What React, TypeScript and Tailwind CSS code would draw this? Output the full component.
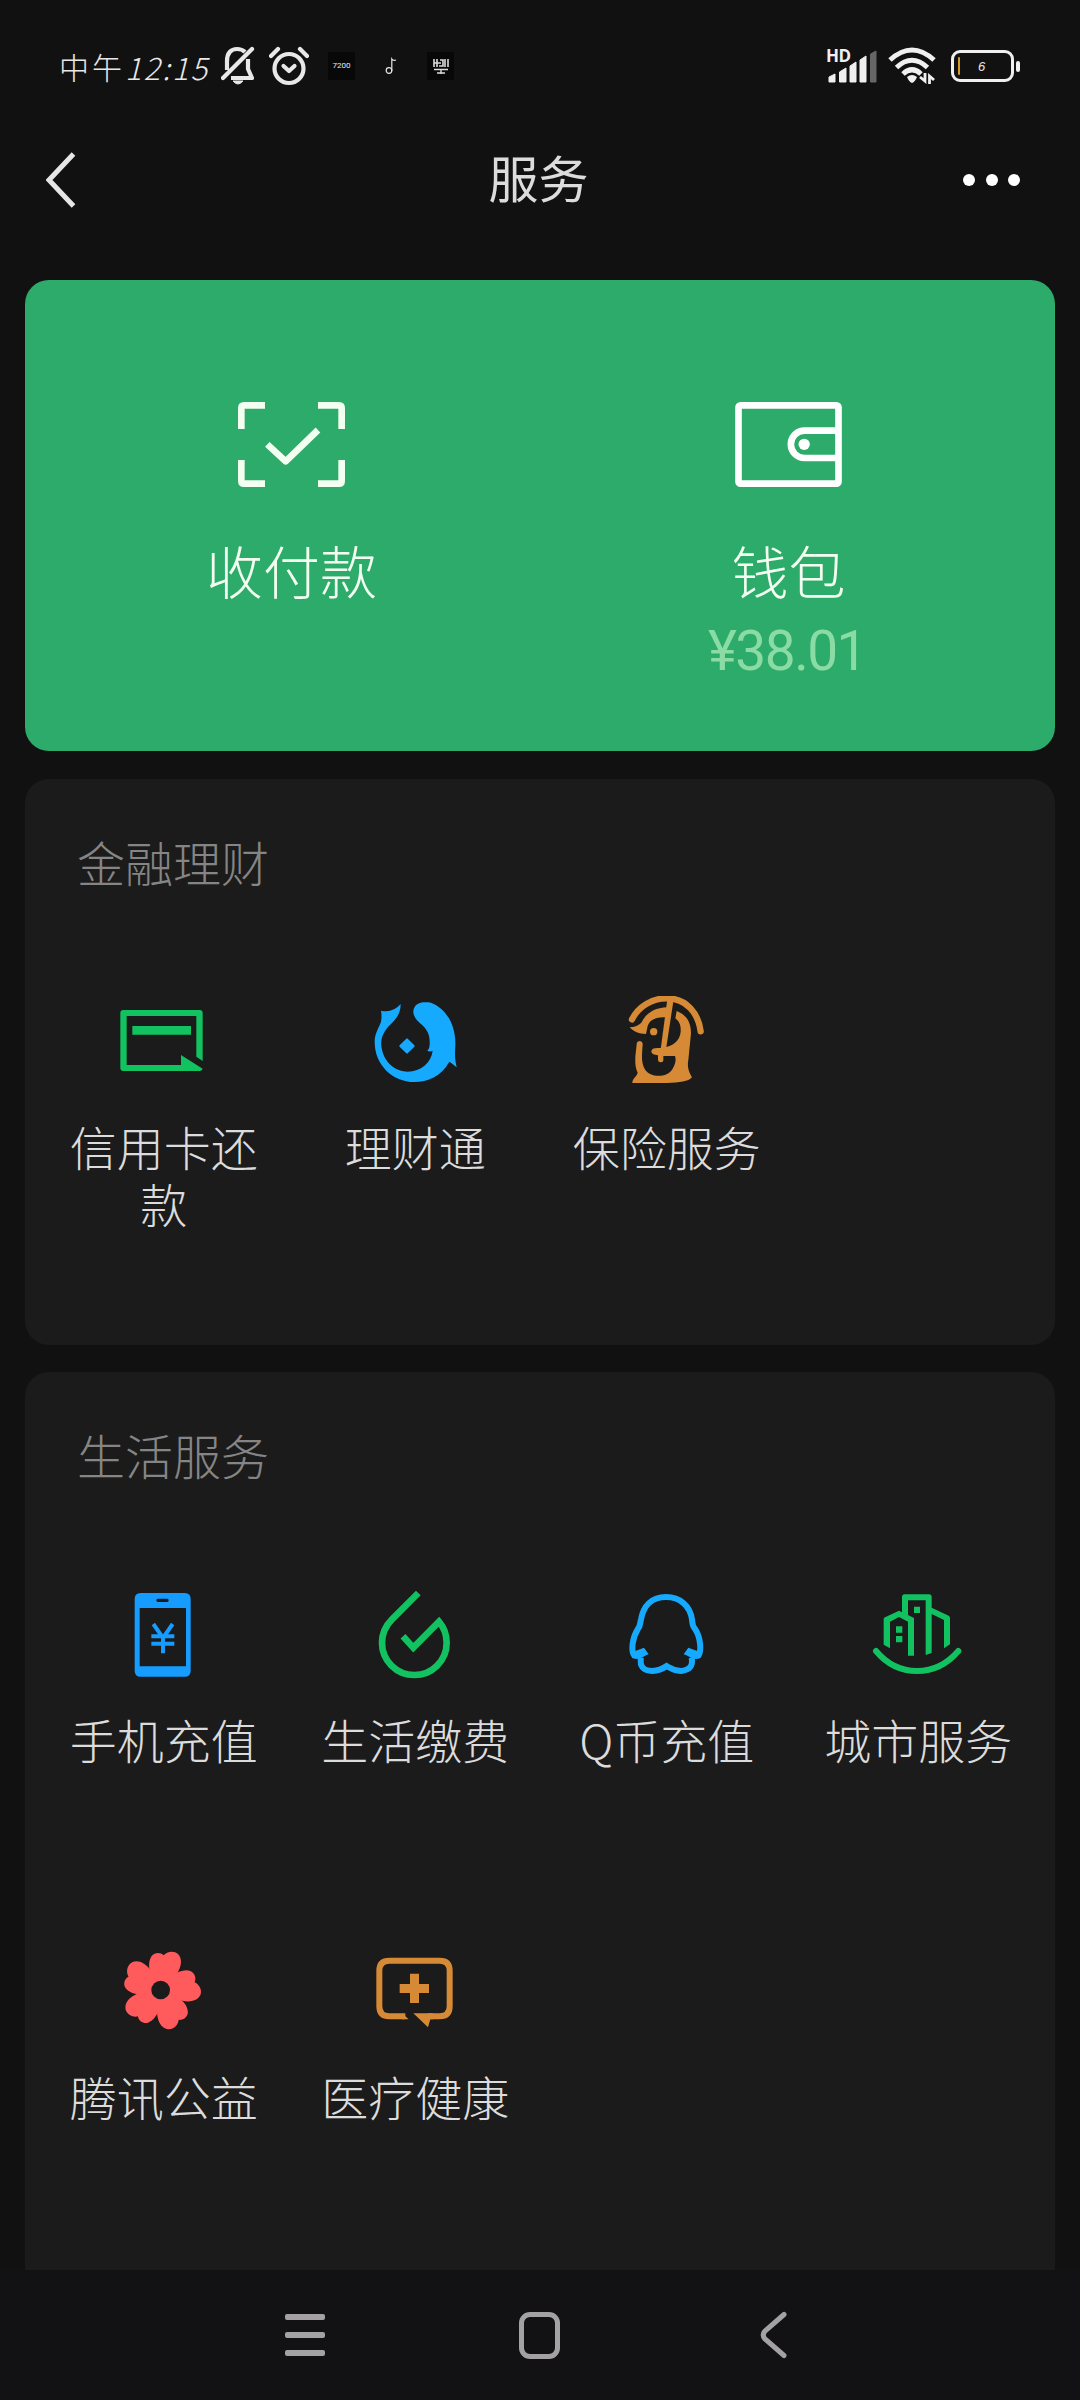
import type { ReactNode } from "react";

type Item = { label: string; icon: ReactNode };

const GREEN = "#12c160";
const BLUE = "#16aaff";
const AMBER = "#d68a36";
const CORAL = "#ff5a5c";

function Icon({ box, children }: { box: string; children: ReactNode }) {
  return (
    <svg viewBox={box} className="h-[90px] w-[90px] shrink-0" fill="none">
      {children}
    </svg>
  );
}

const CardIcon = (
  <Icon box="234 588 270 270">
    <path
      fill={GREEN}
      fillRule="evenodd"
      d="M250 630H479Q488 630 488 639V783L469 770V648H260V795H423V765L488 806Q486 813 479 813H250Q241 813 241 804V639Q241 630 250 630Z"
    />
    <path d="M277 678H453V704H277Z" fill={GREEN} />
  </Icon>
);

const FishIcon = (
  <Icon box="989 588 270 270">
    <path
      fill={BLUE}
      d="M1025 632Q1060 640 1084 612C1084 640 1072 655 1055 672C1030 695 1022 720 1027 745C1035 790 1070 815 1105 815C1145 813 1175 790 1180 752Q1172 756 1164 753Q1172 745 1171 730C1172 705 1165 690 1145 672C1125 655 1118 640 1124 625C1130 608 1150 604 1175 608C1220 625 1250 675 1248 735C1247 760 1245 770 1252 802C1243 795 1238 790 1230 785C1205 830 1165 846 1125 846C1060 846 1006 795 1006 725C1006 700 1018 685 1025 665Q1028 650 1025 632Z"
    />
    <path d="M1103 718L1123 738L1103 758L1083 738Z" fill={BLUE} stroke={BLUE} strokeWidth="6" strokeLinejoin="round" />
  </Icon>
);

const InsuranceIcon = (
  <Icon box="423 108 270 270">
    <path d="M456 178C475 140 515 115 560 115C620 115 655 160 662 214" stroke={AMBER} strokeWidth="19" strokeLinecap="round" />
    <path d="M562 118H581L558 268H542Z" fill={AMBER} />
    <path d="M449 202Q472 200 484 188C496 162 522 143 562 142L558 172C530 170 510 178 503 198L498 222C478 222 460 215 449 202Z" fill={AMBER} />
    <circle cx="521" cy="215" r="11" fill={AMBER} />
    <path
      fill={AMBER}
      d="M590 153C622 165 633 190 633 220L625 300C620 325 630 340 636 352C625 365 600 368 560 369H457C457 355 470 350 473 338C460 310 468 280 470 252Q471 243 480 243Q489 245 488 254C486 280 482 310 496 330C512 354 562 354 578 326C588 308 588 298 585 288H550V302Q549 307 541 307Q534 306 534 300V286C518 284 510 278 516 269C522 262 530 265 546 263C580 260 600 240 602 215C603 195 598 185 586 175Z"
    />
  </Icon>
);

const PhoneIcon = (
  <Icon box="235 564 270 270">
    <path
      fill="#169cff"
      fillRule="evenodd"
      d="M303 576H435Q453 576 453 594V809Q453 827 435 827H303Q285 827 285 809V594Q285 576 303 576ZM300 621V796H439V621ZM354 593Q350 593 350 598Q350 603 354 603H383Q387 603 387 598Q387 593 383 593Z"
    />
    <path d="M341 669L370 711L399 669M335 706H404M335 728H404M370 706V757" stroke="#169cff" strokeWidth="12" />
  </Icon>
);

const DropIcon = (
  <Icon box="989 564 270 270">
    <path
      d="M1137 576L1058 655C1036 677 1028 700 1028 725A97 97 0 0 0 1222 725C1222 700 1214 680 1199 662L1122 740L1091 706"
      stroke={GREEN}
      strokeWidth="20"
    />
  </Icon>
);

const PenguinIcon = (
  <Icon box="243 114 270 270">
    <path
      d="M316 302Q300 318 283 314C272 300 277 260 293 235C302 225 300 215 303 205C310 165 335 138 378 138C421 138 450 165 456 205C457 215 456 225 466 235C482 260 485 300 475 314Q458 318 442 302"
      stroke={BLUE}
      strokeWidth="18"
    />
    <path d="M312 290L326 310L290 322L272 305Z M445 290L431 310L468 322L486 305Z" fill={BLUE} />
    <path d="M303 320C298 348 312 359 337 360C360 359 370 352 380 345C392 352 400 359 423 360C448 358 460 345 455 320" stroke={BLUE} strokeWidth="18" />
  </Icon>
);

const CityIcon = (
  <Icon box="996 114 270 270">
    <path d="M1008 300Q1058 360 1131 360Q1204 360 1255 300" stroke={GREEN} strokeWidth="18" strokeLinecap="round" />
    <path
      d="M1031 281V205Q1031 201 1035 199L1077 179L1086 184V138Q1086 130 1094 130H1167Q1175 130 1175 138V170L1226 194Q1230 197 1230 200V280L1212 292V207L1175 189V306L1157 312V148H1104V192L1122 201V314H1104V212L1077 198L1050 212V292Z"
      fill={GREEN}
    />
    <path d="M1122 167H1140V186H1122ZM1068 226H1087V245H1068ZM1068 255H1087V274H1068Z" fill={GREEN} />
  </Icon>
);

const PETAL =
  "M335 165C326 145 326 122 336 108C345 97 362 96 372 106C380 95 402 90 415 102C430 118 424 140 414 158L363 212Z";

const FlowerIcon = (
  <Icon box="235 78 270 270">
    <g fill={CORAL}>
      <circle cx="363" cy="210" r="62" />
      <path d={PETAL} />
      <path d={PETAL} transform="rotate(72 363 210)" />
      <path d={PETAL} transform="rotate(144 363 210)" />
      <path d={PETAL} transform="rotate(216 363 210)" />
      <path d={PETAL} transform="rotate(288 363 210)" />
    </g>
    <circle cx="363" cy="210" r="28" fill="#1b1b1b" />
  </Icon>
);

const MedicalIcon = (
  <Icon box="989 78 270 270">
    <path d="M1098 289H1050Q1020 289 1020 259V152Q1020 122 1050 122H1201Q1231 122 1231 152V259Q1231 289 1201 289H1165" stroke={AMBER} strokeWidth="18" />
    <path d="M1088 280L1108 298H1088ZM1122 280H1182V298H1173L1166 322Z" fill={AMBER} />
    <path d="M1112 161H1139V192H1169V219H1139V249H1112V219H1081V192H1112Z" fill={AMBER} />
  </Icon>
);

function StatusBar() {
  return (
    <div className="flex h-[132px] items-center pr-[60px] pl-[59px] text-[#e8e8e8]">
      <div className="flex w-[162px] items-center text-[30px] leading-none font-light whitespace-nowrap">
        <span className="tracking-[3px]">中午</span>
        <span className="text-[31px] tracking-[2px] italic">12:15</span>
      </div>
      <svg viewBox="0 0 34 40" className="h-[40px] w-[34px]" fill="none" stroke="#e8e8e8" strokeWidth="4.2">
        <path d="M6 24V15C6 7 10 3 16 3Q21 3 24 6M27 13V23L31 32H10" strokeLinejoin="round" />
        <path d="M2 32L31 3" strokeLinecap="round" />
        <path d="M12 35Q17 41 22 35Z" fill="#e8e8e8" strokeWidth="1" />
      </svg>
      <svg viewBox="0 0 40 40" className="ml-[14px] h-[40px] w-[40px]" fill="none" stroke="#e8e8e8" strokeWidth="4.2">
        <circle cx="20" cy="22.500" r="14.500" />
        <path d="M14.500 20L20 25L25.500 20" strokeLinecap="round" strokeLinejoin="round" />
        <path d="M2 10L9 3M38 10L31 3" strokeLinecap="round" />
      </svg>
      <div className="ml-[19px] flex h-[28px] w-[27px] items-center justify-center bg-[#080808] font-['Roboto'] text-[8px]">7200</div>
      <svg viewBox="0 0 12 18" className="ml-[30px] h-[18px] w-[12px]" fill="none" stroke="#e8e8e8" strokeWidth="1.2">
        <circle cx="4" cy="13.500" r="2.800" />
        <path d="M6.800 14V2Q8 4 11 3" />
      </svg>
      <div className="ml-[30px] flex h-[28px] w-[27px] items-center justify-center bg-[#080808]">
        <svg viewBox="0 0 16 17" className="h-[17px] w-[16px]" fill="none" stroke="#dcdcdc">
          <path d="M1 1V9M4 1V9M7 2H10V8H6M12 1V9M15 1V9M1 5H8" strokeWidth="1.600" />
          <path d="M1 11.500H15M4 15H12M8 11V16" strokeWidth="1.400" />
        </svg>
      </div>
      <div className="flex-1" />
      <div className="relative h-[36px] w-[51px]">
        <svg viewBox="0 0 51 36" className="-ml-[2px] h-[36px] w-[51px]">
          <path d="M3 34V29L9 26V34ZM13.500 34V24L20 20V34ZM24 34V18L30 14V34ZM34 34V12L40 8V34Z" fill="#f0f0f0" stroke="#f0f0f0" strokeLinejoin="round" />
          <path d="M44.500 34V6L50 3V34Z" fill="#666" stroke="#666" strokeLinejoin="round" />
        </svg>
        <span className="absolute top-[-2px] left-[-2px] font-['Open_Sans'] text-[17px] leading-[20px] font-bold tracking-[-0.5px] text-[#f0f0f0]">HD</span>
      </div>
      <svg viewBox="0 0 48 38" className="ml-[9px] h-[38px] w-[48px]" fill="none" stroke="#f0f0f0" strokeWidth="5">
        <path d="M2 13Q24 -7 46 13M8.500 20.500Q24 6 39.500 20.500M15 27Q24 18.500 33 27" />
        <path d="M19 30Q24 26 29 30Q27 35 24 36Q21 35 19 30Z" fill="#f0f0f0" stroke="none" />
        <path d="M37 26V34L32 30M41.500 37V29L46 33" strokeWidth="2.800" />
      </svg>
      <div className="ml-[15px] flex h-[32px] w-[63px] items-center rounded-[9px] border-[3px] border-[#efefef] pl-[4px]">
        <div className="h-[18px] w-[2px] rounded-full bg-[#d69a28]" />
        <span className="ml-[18px] font-['Liberation_Sans'] text-[13px] leading-none italic">6</span>
      </div>
      <div className="ml-[2px] h-[11px] w-[4px] shrink-0 rounded-sm bg-[#efefef]" />
    </div>
  );
}

function Header() {
  return (
    <div className="flex h-[94px] items-center justify-between pt-[2px] pr-[60px] pl-[46px]">
      <svg viewBox="0 0 30 56" className="-mt-[1px] h-[56px] w-[74px]" preserveAspectRatio="xMinYMid" fill="none">
        <path d="M27.500 2L3 28L27.500 54" stroke="#e6e6e6" strokeWidth="5" />
      </svg>
      <h1 className="-mt-[9px] pr-[6px] text-[50px] leading-none font-normal text-[#dcdcdc]">服务</h1>
      <div className="flex w-[57px] justify-between">
        <i className="h-[12px] w-[12px] rounded-full bg-white" />
        <i className="h-[12px] w-[12px] rounded-full bg-white" />
        <i className="h-[12px] w-[12px] rounded-full bg-white" />
      </div>
    </div>
  );
}

function PayCard() {
  return (
    <section className="mx-[25px] mt-[54px] flex h-[471px] rounded-[24px] bg-[#2dab6b] pt-[122px] pr-[16px] pl-[18px]">
      <div className="flex flex-1 flex-col items-center">
        <svg viewBox="174 96 321 255" className="h-[85px] w-[107px]" fill="none" stroke="#f3fff0" strokeWidth="20">
          <path d="M184 177V114Q184 106 192 106H255M414 106H477Q485 106 485 114V177M485 270V333Q485 341 477 341H414M255 341H192Q184 341 184 333V270" />
          <path d="M262 223L317 274L414 180" strokeLinejoin="round" />
        </svg>
        <div className="mt-[52px] text-[57px] leading-[60px] font-light text-[#f3fff0]">收付款</div>
      </div>
      <div className="flex flex-1 flex-col items-center pr-[2px]">
        <svg viewBox="226 96 320 255" className="h-[85px] w-[107px]" fill="none" stroke="#fff" strokeWidth="20">
          <rect x="236" y="106" width="300" height="235" rx="6" />
          <path d="M530 182H434A41 41 0 0 0 434 264H530" />
          <circle cx="433" cy="223" r="17" fill="#fff" stroke="none" />
        </svg>
        <div className="mt-[52px] text-[57px] leading-[60px] font-light text-[#f3fff0]">钱包</div>
        <div className="mt-[20px] pr-[3px] font-['Roboto'] text-[55px] leading-[64px] tracking-[-1.5px] text-[#8bdba4]">¥38.01</div>
      </div>
    </section>
  );
}

function Section({ title, items, className }: { title: string; items: Item[]; className: string }) {
  return (
    <section className={`mx-[25px] bg-[#1b1b1b] px-[12px] pt-[52px] ${className}`}>
      <h2 className="pl-[40px] text-[48px] leading-[60px] font-light text-[#858585]">{title}</h2>
      <div className="mt-[105px] grid grid-cols-4 gap-y-[179px]">
        {items.map((item) => (
          <div key={item.label} className="flex flex-col items-center">
            {item.icon}
            <div className="mt-[31px] w-[200px] pl-[2px] text-center text-[47px] leading-[57px] font-light text-[#dcdcdc]">{item.label}</div>
          </div>
        ))}
      </div>
    </section>
  );
}

function NavBar() {
  return (
    <nav className="flex h-[130px] items-center justify-between bg-[#121113] pr-[293px] pl-[285px]">
      <div className="flex w-[40px] flex-col gap-[12px]">
        <i className="h-[6px] rounded-[2px] bg-[#a3a1a4]" />
        <i className="h-[6px] rounded-[2px] bg-[#a3a1a4]" />
        <i className="h-[6px] rounded-[2px] bg-[#a3a1a4]" />
      </div>
      <div className="-ml-[7px] h-[47px] w-[41px] rounded-[11px] border-[5px] border-[#a3a1a4]" />
      <svg viewBox="0 0 27 48" className="h-[48px] w-[27px]" fill="none">
        <path d="M24 3.500L5 20Q1.500 24 5 28L24 44.500" stroke="#a3a1a4" strokeWidth="5" strokeLinecap="round" />
      </svg>
    </nav>
  );
}

export default function App() {
  return (
    <main className="flex h-[2400px] w-[1080px] flex-col overflow-hidden bg-[#111111] font-['Noto_Sans_CJK_SC',sans-serif]">
      <StatusBar />
      <Header />
      <PayCard />
      <Section
        title="金融理财"
        className="mt-[28px] h-[566px] rounded-[24px]"
        items={[
          { label: "信用卡还款", icon: CardIcon },
          { label: "理财通", icon: FishIcon },
          { label: "保险服务", icon: InsuranceIcon },
        ]}
      />
      <Section
        title="生活服务"
        className="mt-[27px] h-[898px] rounded-t-[24px]"
        items={[
          { label: "手机充值", icon: PhoneIcon },
          { label: "生活缴费", icon: DropIcon },
          { label: "Q币充值", icon: PenguinIcon },
          { label: "城市服务", icon: CityIcon },
          { label: "腾讯公益", icon: FlowerIcon },
          { label: "医疗健康", icon: MedicalIcon },
        ]}
      />
      <NavBar />
    </main>
  );
}
